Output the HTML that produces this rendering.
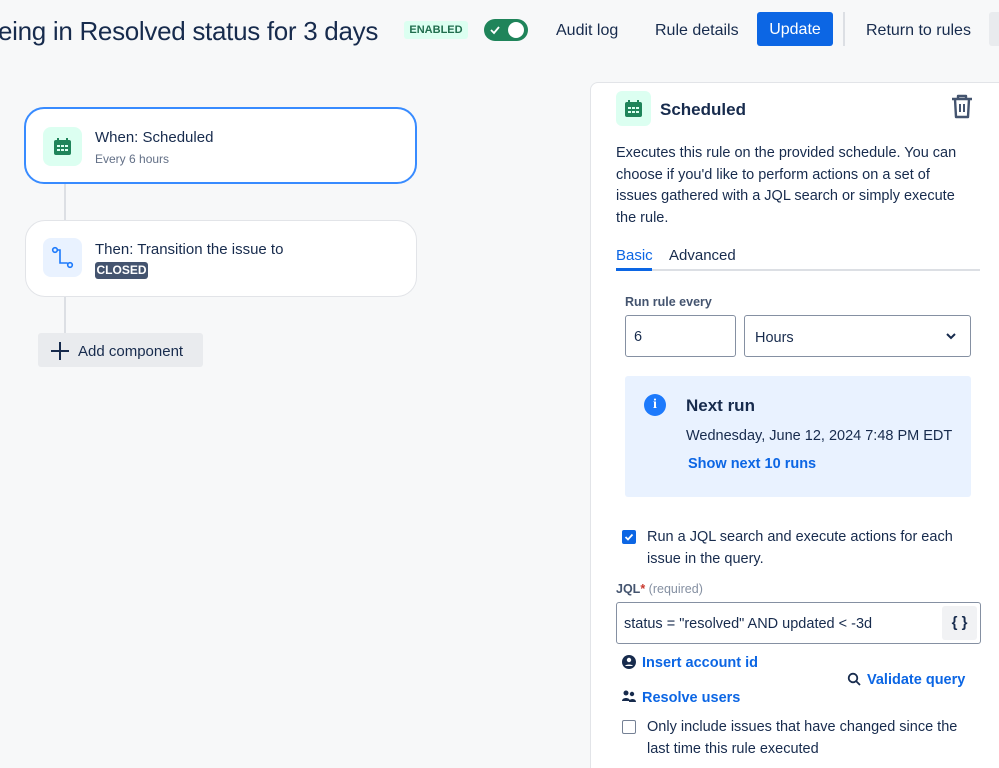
<!DOCTYPE html>
<html><head><meta charset="utf-8"><style>
*{box-sizing:border-box;margin:0;padding:0}
html,body{width:999px;height:768px;overflow:hidden}
body{background:#f7f8f9;font-family:"Liberation Sans",sans-serif;color:#172b4d;position:relative}
.a{position:absolute}
.link{color:#0c66e4}
</style></head><body>
<div class="a" style="left:-2px;top:16px;font-size:26px;letter-spacing:-0.3px;color:#172b4d;white-space:nowrap">eing in Resolved status for 3 days</div>
<div class="a" style="left:404px;top:21px;width:64px;height:18px;background:#dcfff1;border-radius:3px;color:#216e4e;font-size:11px;font-weight:bold;text-align:center;line-height:18px">ENABLED</div>
<div class="a" style="left:484px;top:19px;width:44px;height:22px;background:#1f845a;border-radius:11px"><div class="a" style="left:24px;top:3px;width:16px;height:16px;border-radius:8px;background:#fff"></div><svg class="a" style="left:5px;top:5px" width="12" height="12" viewBox="0 0 12 12"><path d="M2 6l3 3 5-6" stroke="#fff" stroke-width="1.8" fill="none"/></svg></div>
<div class="a" style="left:556px;top:22px;font-size:16px">Audit log</div>
<div class="a" style="left:655px;top:22px;font-size:16px">Rule details</div>
<div class="a" style="left:757px;top:12px;width:76px;height:34px;background:#0c66e4;border-radius:3px;color:#fff;font-size:16px;text-align:center;line-height:36px">Update</div>
<div class="a" style="left:843px;top:12px;width:2px;height:34px;background:#dcdfe4"></div>
<div class="a" style="left:866px;top:22px;font-size:16px">Return to rules</div>
<div class="a" style="left:989px;top:12px;width:20px;height:34px;background:#e9ebee;border-radius:3px"></div>

<div class="a" style="left:64px;top:184px;width:2px;height:170px;background:#dcdfe4"></div>
<div class="a" style="left:24px;top:107px;width:393px;height:77px;background:#fff;border:2px solid #388bff;border-radius:20px"></div>
<div class="a" style="left:43px;top:127px;width:39px;height:39px;background:#dcfff1;border-radius:8px"></div>
<svg class="a" style="left:52px;top:136px" width="21" height="21" viewBox="0 0 21 21"><rect x="2" y="4" width="17" height="15" rx="2" fill="#1f845a"/><rect x="5" y="2" width="2" height="4" fill="#1f845a"/><rect x="14" y="2" width="2" height="4" fill="#1f845a"/><g fill="#dcfff1"><rect x="5" y="9" width="3" height="2"/><rect x="9" y="9" width="3" height="2"/><rect x="13" y="9" width="3" height="2"/><rect x="5" y="13" width="3" height="2"/><rect x="9" y="13" width="3" height="2"/><rect x="13" y="13" width="3" height="2"/></g></svg>
<div class="a" style="left:95px;top:129px;font-size:15px">When: Scheduled</div>
<div class="a" style="left:95px;top:152px;font-size:12px;color:#626f86">Every 6 hours</div>
<div class="a" style="left:25px;top:220px;width:392px;height:77px;background:#fff;border:1px solid #e2e4e8;border-radius:20px"></div>
<div class="a" style="left:43px;top:238px;width:39px;height:39px;background:#e9f2ff;border-radius:8px"></div>
<svg class="a" style="left:50px;top:245px" width="26" height="26" viewBox="0 0 26 26"><circle cx="5" cy="5" r="2.3" stroke="#1d7afc" stroke-width="1.6" fill="none"/><circle cx="20" cy="20" r="2.3" stroke="#1d7afc" stroke-width="1.6" fill="none"/><path d="M7.3 5H10v13h7.7" stroke="#1d7afc" stroke-width="1.6" fill="none"/></svg>
<div class="a" style="left:95px;top:241px;font-size:15px">Then: Transition the issue to</div>
<div class="a" style="left:95px;top:262px;width:53px;height:17px;background:#44546f;border-radius:3px;color:#fff;font-size:12px;font-weight:bold;text-align:center;line-height:17px">CLOSED</div>
<div class="a" style="left:38px;top:333px;width:165px;height:34px;background:#e9ebee;border-radius:3px"></div>
<svg class="a" style="left:49px;top:340px" width="22" height="22" viewBox="0 0 22 22"><path d="M11 2v18M2 11h18" stroke="#172b4d" stroke-width="2"/></svg>
<div class="a" style="left:78px;top:343px;font-size:15px">Add component</div>

<div class="a" style="left:590px;top:82px;width:420px;height:720px;background:#fff;border:1px solid #e2e4e8;border-radius:8px"></div>
<div class="a" style="left:616px;top:91px;width:35px;height:35px;background:#dcfff1;border-radius:6px"></div>
<svg class="a" style="left:623px;top:98px" width="21" height="21" viewBox="0 0 21 21"><rect x="2" y="4" width="17" height="15" rx="2" fill="#1f845a"/><rect x="5" y="2" width="2" height="4" fill="#1f845a"/><rect x="14" y="2" width="2" height="4" fill="#1f845a"/><g fill="#dcfff1"><rect x="5" y="9" width="3" height="2"/><rect x="9" y="9" width="3" height="2"/><rect x="13" y="9" width="3" height="2"/><rect x="5" y="13" width="3" height="2"/><rect x="9" y="13" width="3" height="2"/><rect x="13" y="13" width="3" height="2"/></g></svg>
<div class="a" style="left:660px;top:100px;font-size:17px;font-weight:bold">Scheduled</div>
<svg class="a" style="left:950px;top:94px" width="24" height="26" viewBox="0 0 24 26"><path d="M8 4V2h8v2M2 5h20M5 5l1 18h12l1-18" stroke="#44546f" stroke-width="2.4" fill="none" stroke-linejoin="round"/><path d="M10 10v8M14 10v8" stroke="#44546f" stroke-width="2"/></svg>
<div class="a" style="left:616px;top:143px;width:355px;font-size:14.5px;line-height:21.5px;color:#172b4d">Executes this rule on the provided schedule. You can choose if you'd like to perform actions on a set of issues gathered with a JQL search or simply execute the rule.</div>
<div class="a" style="left:616px;top:247px;font-size:15px;color:#0c66e4">Basic</div>
<div class="a" style="left:669px;top:247px;font-size:15px">Advanced</div>
<div class="a" style="left:616px;top:269px;width:364px;height:2px;background:#dcdfe4"></div>
<div class="a" style="left:616px;top:268px;width:36px;height:3px;background:#0c66e4"></div>
<div class="a" style="left:625px;top:295px;font-size:12.5px;font-weight:bold;color:#44546f">Run rule every</div>
<div class="a" style="left:625px;top:315px;width:111px;height:42px;border:1px solid #8590a2;border-radius:3px;font-size:14.5px;padding:13px 8px">6</div>
<div class="a" style="left:744px;top:315px;width:227px;height:42px;border:1px solid #8590a2;border-radius:3px;font-size:14.5px;padding:14px 10px">Hours</div>
<svg class="a" style="left:945px;top:331px" width="12" height="10" viewBox="0 0 12 10"><path d="M2 3l4 4 4-4" stroke="#172b4d" stroke-width="2" fill="none"/></svg>
<div class="a" style="left:625px;top:376px;width:346px;height:121px;background:#e9f2ff;border-radius:3px"></div>
<div class="a" style="left:644px;top:394px;width:22px;height:22px;border-radius:11px;background:#1d7afc;color:#fff;font-weight:bold;font-size:14px;text-align:center;line-height:22px;font-family:'Liberation Serif',serif">i</div>
<div class="a" style="left:686px;top:396px;font-size:17px;font-weight:bold">Next run</div>
<div class="a" style="left:686px;top:428px;font-size:14.5px">Wednesday, June 12, 2024 7:48 PM EDT</div>
<div class="a link" style="left:688px;top:456px;font-size:14.5px;font-weight:bold">Show next 10 runs</div>
<div class="a" style="left:622px;top:530px;width:14px;height:14px;background:#0c66e4;border-radius:2px"></div>
<svg class="a" style="left:623px;top:531px" width="12" height="12" viewBox="0 0 12 12"><path d="M2.5 6l2.5 2.5 4.5-5" stroke="#fff" stroke-width="1.8" fill="none"/></svg>
<div class="a" style="left:647px;top:526px;width:330px;font-size:14.5px;line-height:22px">Run a JQL search and execute actions for each issue in the query.</div>
<div class="a" style="left:616px;top:582px;font-size:12.5px;font-weight:bold;color:#44546f">JQL<span style="color:#c9372c">*</span> <span style="color:#8590a2;font-weight:normal">(required)</span></div>
<div class="a" style="left:616px;top:602px;width:365px;height:42px;border:1px solid #8590a2;border-radius:3px;font-size:14.5px;padding:13px 7px">status = "resolved" AND updated &lt; -3d</div>
<div class="a" style="left:942px;top:606px;width:35px;height:34px;background:#f1f2f4;border-radius:3px;font-weight:bold;font-size:15px;text-align:center;line-height:34px">{ }</div>
<svg class="a" style="left:622px;top:655px" width="14" height="14" viewBox="0 0 14 14"><circle cx="7" cy="7" r="7" fill="#172b4d"/><circle cx="7" cy="5" r="2.2" fill="#fff"/><path d="M3 11c1-2 7-2 8 0" fill="#fff"/></svg>
<div class="a link" style="left:642px;top:655px;font-size:14.5px;font-weight:bold">Insert account id</div>
<svg class="a" style="left:621px;top:689px" width="16" height="14" viewBox="0 0 16 14"><circle cx="5" cy="4" r="2.5" fill="#172b4d"/><circle cx="11" cy="5" r="2.2" fill="#172b4d"/><path d="M1 12c0-4 8-4 8 0zM8 13c0-4 7-4 7 0z" fill="#172b4d"/></svg>
<div class="a link" style="left:642px;top:690px;font-size:14.5px;font-weight:bold">Resolve users</div>
<svg class="a" style="left:847px;top:672px" width="14" height="14" viewBox="0 0 14 14"><circle cx="6" cy="6" r="4.3" stroke="#172b4d" stroke-width="1.8" fill="none"/><path d="M9 9l4 4" stroke="#172b4d" stroke-width="1.8"/></svg>
<div class="a link" style="left:867px;top:672px;font-size:14.5px;font-weight:bold">Validate query</div>
<div class="a" style="left:622px;top:720px;width:14px;height:14px;border:1.5px solid #758195;border-radius:2px"></div>
<div class="a" style="left:647px;top:716px;width:330px;font-size:14.5px;line-height:22px">Only include issues that have changed since the last time this rule executed</div>
</body></html>
